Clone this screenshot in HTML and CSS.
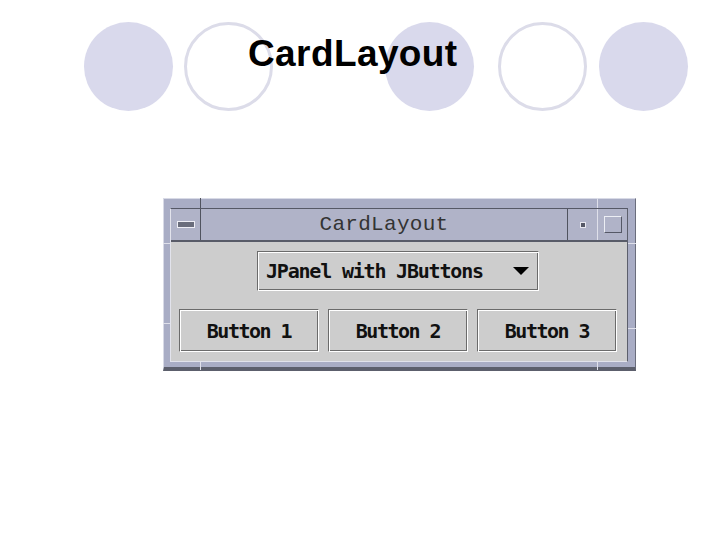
FILE: index.html
```html
<!DOCTYPE html>
<html>
<head>
<meta charset="utf-8">
<title>CardLayout</title>
<link rel="stylesheet" href="styles.css">
</head>
<body>
<div class="slide">
  <div class="circles">
    <span class="circle fill c1"></span>
    <span class="circle ring c2"></span>
    <span class="circle fill c3"></span>
    <span class="circle ring c4"></span>
    <span class="circle fill c5"></span>
  </div>
  <h1 class="heading">CardLayout</h1>
  <div class="window">
    <div class="frame-inner">
      <div class="titlebar">
        <div class="tb-btn tb-min"><span class="min-icon"></span></div>
        <div class="tb-title">CardLayout</div>
        <div class="tb-btn tb-iconify"><span class="dot-icon"></span></div>
        <div class="tb-btn tb-max"><span class="max-icon"></span></div>
      </div>
      <div class="content">
        <div class="combo"><span class="combo-text">JPanel with JButtons</span><span class="combo-arrow"></span></div>
        <div class="buttons">
          <div class="btn">Button 1</div>
          <div class="btn">Button 2</div>
          <div class="btn">Button 3</div>
        </div>
      </div>
    </div>
    <span class="tick v dark t-tl"></span>
    <span class="tick v light t-tr"></span>
    <span class="tick v light t-bl"></span>
    <span class="tick v light t-br"></span>
    <span class="tick h light t-lt"></span>
    <span class="tick h light t-lb"></span>
    <span class="tick h light t-rt"></span>
    <span class="tick h light t-rb"></span>
  </div>
</div>
</body>
</html>
```
FILE: styles.css
```css
body {
  margin: 0;
  background: #ffffff;
}

.slide {
  position: relative;
  width: 720px;
  height: 540px;
  overflow: hidden;
}

.circles {
  display: flex;
  padding-top: 22px;
  height: 89px;
}

.circle {
  flex: none;
  width: 89px;
  height: 89px;
  border-radius: 50%;
  box-sizing: border-box;
}

.fill { background: #d9d9ec; }
.ring { border: 3px solid #dcdce9; }

.c1 { margin-left: 84px; }
.c2 { margin-left: 11px; }
.c3 { margin-left: 112px; }
.c4 { margin-left: 24px; }
.c5 { margin-left: 12px; }

.heading {
  position: absolute;
  left: 248px;
  top: 35px;
  margin: 0;
  font: bold 37px/1 "Liberation Sans", Arial, sans-serif;
  letter-spacing: 0.4px;
  color: #000;
}

.window {
  position: relative;
  margin: 87px 0 0 163px;
  width: 473px;
  height: 173px;
  box-sizing: border-box;
  background: #a9adc5;
  border-style: solid;
  border-width: 1px 1px 4px 1px;
  border-color: #d8dae6 #6a6d7c #5c5f6c #d8dae6;
  padding: 9px 7px 5px 6px;
}

.frame-inner {
  height: 100%;
  box-sizing: border-box;
  display: flex;
  flex-direction: column;
  border-style: solid;
  border-width: 1px;
  border-color: #555866 #5c5f6c #e2e3ec #e2e3ec;
}

.titlebar {
  display: flex;
  height: 31px;
  flex: none;
  background: #b0b3c8;
  border-bottom: 2px solid #585b68;
}

.tb-btn {
  flex: none;
  width: 29px;
  display: flex;
  align-items: center;
  justify-content: center;
}

.tb-min { border-right: 1px solid #50535f; }

.tb-iconify {
  border-left: 1px solid #50535f;
  border-right: 1px solid #dfe0ea;
}

.tb-title {
  flex: 1;
  text-align: center;
  font: 21px/31px "Liberation Mono", monospace;
  letter-spacing: 0.3px;
  color: #333;
}

.min-icon {
  width: 16px;
  height: 5px;
  background: #6a6d7c;
  border: 1px solid #eeeef5;
}

.dot-icon {
  width: 4px;
  height: 4px;
  background: #555866;
  border: 1px solid #e8e8f0;
}

.max-icon {
  width: 16px;
  height: 15px;
  border: 1px solid;
  border-color: #eceef4 #555866 #555866 #eceef4;
}

.content {
  flex: 1;
  display: flex;
  flex-direction: column;
  gap: 18px;
  padding: 9px 10px 8px 8px;
  background: #cdcdcd;
}

.combo,
.btn {
  box-sizing: border-box;
  border: 1px solid;
  border-color: #6b6b6b #ffffff #ffffff #6b6b6b;
  box-shadow: inset 1px 1px 0 #ffffff, inset -1px -1px 0 #6b6b6b;
}

.combo {
  align-self: center;
  width: 282px;
  height: 40px;
  display: flex;
  align-items: center;
  justify-content: space-between;
  padding: 0 9px 0 8px;
}

.combo-text,
.btn {
  font: bold 20px/1 "DejaVu Sans Mono", monospace;
  letter-spacing: -1.2px;
  color: #111;
}

.combo-arrow {
  width: 0;
  height: 0;
  border-left: 8px solid transparent;
  border-right: 8px solid transparent;
  border-top: 8px solid #000;
}

.buttons {
  display: flex;
  gap: 9px;
}

.btn {
  width: 140px;
  height: 43px;
  display: flex;
  align-items: center;
  justify-content: center;
  letter-spacing: -1.5px;
}

.tick {
  position: absolute;
}

.tick.v { width: 1px; }
.tick.h { height: 1px; }
.tick.dark { background: #50535f; }
.tick.light { background: #dfe0ea; }

.t-tl { left: 36px; top: -1px; height: 10px; }
.t-tr { left: 433px; top: -1px; height: 10px; }
.t-bl { left: 36px; top: 163px; height: 8px; }
.t-br { left: 433px; top: 163px; height: 8px; }
.t-lt { left: -1px; top: 44px; width: 7px; }
.t-lb { left: -1px; top: 124px; width: 7px; }
.t-rt { left: 464px; top: 44px; width: 8px; }
.t-rb { left: 464px; top: 129px; width: 8px; }
```
